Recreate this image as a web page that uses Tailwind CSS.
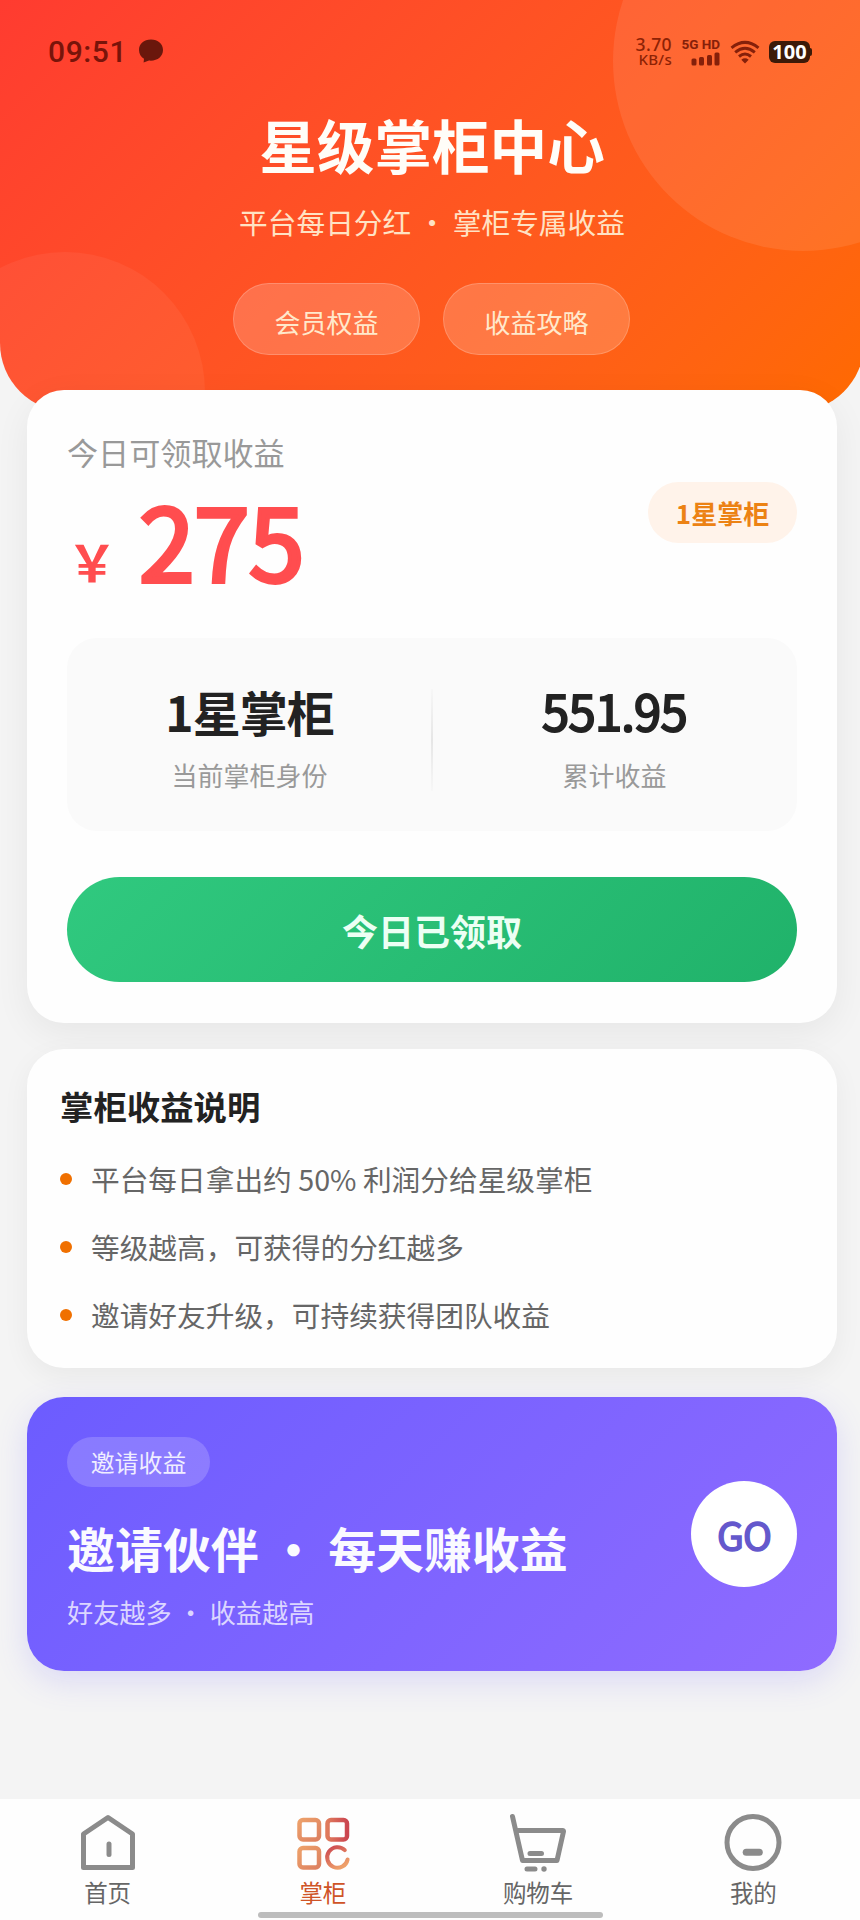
<!DOCTYPE html>
<html lang="zh-CN">
<head>
<meta charset="utf-8">
<title>星级掌柜中心</title>
<script src="https://cdn.jsdelivr.net/npm/@tailwindcss/browser@4"></script>
</head>
<body class="w-[860px] h-[1920px] overflow-hidden bg-[#f4f4f4] font-['Noto_Sans_CJK_SC',sans-serif]">
<div class="w-[864px] h-[1920px] flex flex-col">

  <header class="relative h-[412px] shrink-0 overflow-hidden rounded-b-[69px] bg-linear-135 from-[#ff3b30] to-[#ff6a00]">
    <div class="absolute left-[613px] top-[-129px] size-[380px] rounded-full bg-white/9"></div>
    <div class="absolute left-[-75px] top-[252px] size-[280px] rounded-full bg-white/5"></div>

    <div class="relative h-[104px] pl-[48px] pr-[52px] flex items-center">
      <span class="font-['Roboto',sans-serif] font-medium text-[30px] leading-[30px] tracking-[0.6px] text-[#78140a]">09:51</span>
      <svg class="ml-[11px] mt-[-3px]" width="26" height="24" viewBox="0 0 26 24" fill="#6a170c"><path d="M13 0.5C5.800 0.500 1 5 1 11c0 4 2 7 5 8.700L5.600 23.500 11 21.600c8 .8 14-4 14-10.600C25 5 20 .5 13 .5Z"/></svg>
      <div class="ml-auto flex items-center">
        <div class="w-[37px] font-['Noto_Sans',sans-serif] font-medium text-[#8d2205] text-right">
          <div class="text-[17.500px] leading-[15px] tracking-[0.4px]">3.70</div>
          <div class="text-[15px] leading-[15px] tracking-[0.3px]">KB/s</div>
        </div>
        <div class="ml-[9px] w-[39px] flex flex-col items-end text-[#85200a]">
          <div class="font-['Roboto',sans-serif] font-bold text-[13.500px] leading-[13px] whitespace-nowrap">5G HD</div>
          <svg class="mt-[1px]" width="29" height="14" viewBox="0 0 29 14" fill="#85200a"><rect x="0.500" y="6.500" width="5" height="7" rx="1.500"/><rect x="8" y="5" width="5" height="8.500" rx="1.500"/><rect x="16" y="3" width="5" height="10.500" rx="1.500"/><rect x="23.500" y="0.500" width="5" height="13" rx="1.500"/></svg>
        </div>
        <svg class="ml-[10px]" width="30" height="24" viewBox="0 0 30 24" fill="none" stroke="#85200a" stroke-width="3"><path d="M1.500 7.800Q15-3 28.500 7.800"/><path d="M5.200 12.300Q15 4.300 24.800 12.300"/><path d="M9 16.500Q15 11.500 21 16.500"/><path d="M15 23.500 11.300 19.700Q15 17 18.700 19.700Z" fill="#85200a" stroke="none"/></svg>
        <div class="ml-[9px] w-[41px] h-[22px] rounded-[6px] bg-[#3c1a08] flex items-center justify-center font-['Open_Sans',sans-serif] font-bold text-[20px] leading-[22px] text-white">100</div>
        <div class="w-[2px] h-[8px] rounded-r-[2px] bg-[#3c1a08]"></div>
      </div>
    </div>

    <div class="relative flex flex-col items-center pt-[10px]">
      <h1 class="font-bold text-[57.600px] leading-[60px] text-[#fffdf8]">星级掌柜中心</h1>
      <p class="mt-[30px] text-[28.700px] leading-[36px] text-[#ffe2c4]">平台每日分红 ・ 掌柜专属收益</p>
      <div class="mt-[43px] mr-[1px] flex gap-[23px]">
        <div class="w-[187px] h-[72px] pt-[5px] rounded-full border border-white/20 bg-white/18 flex items-center justify-center text-[26px] leading-[36px] text-[#ffe9cc]">会员权益</div>
        <div class="w-[187px] h-[72px] pt-[5px] rounded-full border border-white/20 bg-white/18 flex items-center justify-center text-[26px] leading-[36px] text-[#ffe9cc]">收益攻略</div>
      </div>
    </div>
  </header>

  <main class="relative mt-[-22px] px-[27px]">
    <section class="h-[633px] px-[40px] pt-[40px] rounded-[37px] bg-[#fefefe] shadow-[0_10px_36px_rgba(0,0,0,0.06)]">
      <div class="flex justify-between items-start">
        <div>
          <div class="text-[31.100px] leading-[44px] text-[#999]">今日可领取收益</div>
          <div class="flex items-baseline h-[130px] leading-[130px] font-bold text-[#ff4d4f]">
            <span class="text-[50px] leading-[134px]">￥</span>
            <span class="ml-[22px] font-normal text-[100px] leading-[130px] tracking-[-0.500px] [-webkit-text-stroke:4px_#ff4d4f]">275</span>
          </div>
        </div>
        <div class="mt-[52px] w-[149px] h-[61px] rounded-full bg-[#fff3ea] flex items-center justify-center font-bold text-[26px] leading-[36px] text-[#ec8214]">1星掌柜</div>
      </div>
      <div class="mt-[34px] h-[193px] pt-[43px] rounded-[30px] bg-[#fafafa] flex">
        <div class="flex-1 flex flex-col items-center">
          <div class="font-bold text-[48px] leading-[60px] tracking-[-1px] text-[#222]">1星掌柜</div>
          <div class="mt-[16px] text-[26px] leading-[36px] text-[#999]">当前掌柜身份</div>
        </div>
        <div class="mt-[8px] w-[2px] h-[102px] -mx-px bg-linear-to-b from-[#f7f7f7] via-[#e6e6e6] to-[#f7f7f7]"></div>
        <div class="flex-1 flex flex-col items-center">
          <div class="font-normal text-[49px] leading-[58px] mb-[2px] tracking-[-0.800px] text-[#222] [-webkit-text-stroke:2px_#222]">551.95</div>
          <div class="mt-[16px] text-[26px] leading-[36px] text-[#999]">累计收益</div>
        </div>
      </div>
      <div class="mt-[46px] h-[105px] rounded-full bg-linear-135 from-[#30c97f] to-[#20b26a] flex items-center justify-center font-bold text-[36px] leading-[50px] text-[#ecfff4]">今日已领取</div>
    </section>

    <section class="mt-[26px] h-[319px] px-[33px] pt-[35px] rounded-[37px] bg-[#fefefe] shadow-[0_8px_28px_rgba(0,0,0,0.05)]">
      <h2 class="font-bold text-[33.400px] leading-[44px] text-[#222]">掌柜收益说明</h2>
      <ul class="mt-[17px] text-[28.700px] leading-[40px] text-[#666]">
        <li class="flex items-center h-[68px]"><span class="size-[12px] rounded-full bg-[#f07000] mr-[19px]"></span>平台每日拿出约 50% 利润分给星级掌柜</li>
        <li class="flex items-center h-[68px]"><span class="size-[12px] rounded-full bg-[#f07000] mr-[19px]"></span>等级越高，可获得的分红越多</li>
        <li class="flex items-center h-[68px]"><span class="size-[12px] rounded-full bg-[#f07000] mr-[19px]"></span>邀请好友升级，可持续获得团队收益</li>
      </ul>
    </section>

    <section class="mt-[29px] h-[274px] px-[40px] pt-[40px] rounded-[37px] bg-linear-135 from-[#6c5cff] to-[#8f6bff] shadow-[0_10px_32px_rgba(108,92,255,0.18)] flex justify-between">
      <div>
        <div class="w-[143px] h-[50px] rounded-full bg-white/18 flex items-center justify-center text-[23.900px] leading-[34px] text-[#f0eeff]">邀请收益</div>
        <div class="mt-[30px] font-bold text-[47.900px] leading-[60px] text-[#fafaff]">邀请伙伴 ・ 每天赚收益</div>
        <div class="mt-[17px] text-[26.200px] leading-[36px] text-[#dcd6ff]">好友越多 ・ 收益越高</div>
      </div>
      <div class="mt-[44px] size-[106px] rounded-full bg-white flex items-center justify-center font-normal text-[39px] leading-[50px] tracking-[-1px] text-[#6458cc] [-webkit-text-stroke:1.500px_#6458cc]">GO</div>
    </section>
  </main>

  <nav class="mt-auto w-[861px] h-[121px] bg-[#fefefe] flex flex-col">
    <div class="h-[113px] pt-[13px] grid grid-cols-4 justify-items-center text-[23.500px] leading-[34px] text-[#666]">
      <div class="flex flex-col items-center">
        <svg width="60" height="60" viewBox="0 0 60 60" fill="none" stroke="#8b8b8b" stroke-width="5" stroke-linejoin="round" stroke-linecap="round"><path d="M30 5.500 54.500 22V55.500H5.500V22Z"/><path d="M31 32V42.500"/></svg>
        <span class="mt-[3px]">首页</span>
      </div>
      <div class="flex flex-col items-center text-[#cf5427]">
        <svg width="60" height="60" viewBox="0 0 60 60" fill="none" stroke-width="4.500" stroke-linecap="round">
          <defs>
            <linearGradient id="a" x1="0" y1="0" x2="1" y2="1"><stop offset="0" stop-color="#eda06a"/><stop offset="1" stop-color="#dd8161"/></linearGradient>
            <linearGradient id="b" x1="0" y1="0" x2="1" y2="0"><stop offset="0" stop-color="#e07a5c"/><stop offset="1" stop-color="#cb4650"/></linearGradient>
            <linearGradient id="c" x1="0" y1="0" x2="0.600" y2="1"><stop offset="0" stop-color="#cb4650"/><stop offset="1" stop-color="#ee9f69"/></linearGradient>
          </defs>
          <rect x="6.500" y="8" width="19.500" height="19.500" rx="3.500" stroke="url(#a)"/>
          <rect x="34.500" y="8" width="19.500" height="19.500" rx="3.500" stroke="url(#b)"/>
          <rect x="6.500" y="36" width="19.500" height="19.500" rx="3.500" stroke="url(#a)"/>
          <path d="M51.800 38.200A10.300 10.300 0 1 0 54.600 47.500" stroke="url(#c)" stroke-width="4"/>
        </svg>
        <span class="mt-[3px]">掌柜</span>
      </div>
      <div class="flex flex-col items-center">
        <svg width="60" height="60" viewBox="0 0 60 60" fill="none" stroke="#8b8b8b" stroke-width="5" stroke-linejoin="round" stroke-linecap="round"><path d="M4.500 4.500 14.500 48.500H49L55.500 19.500Q55.500 18.500 54.500 18.500H8.500"/><path d="M22 41.500H33.500M19 57H27"/><circle cx="36" cy="57" r="2.700" fill="#8b8b8b" stroke="none"/></svg>
        <span class="mt-[3px]">购物车</span>
      </div>
      <div class="flex flex-col items-center">
        <svg width="60" height="60" viewBox="0 0 60 60" fill="none" stroke="#8b8b8b"><circle cx="30" cy="30.500" r="26" stroke-width="5"/><path d="M23.200 40.300H36.300" stroke-width="7" stroke-linecap="round"/></svg>
        <span class="mt-[3px]">我的</span>
      </div>
    </div>
    <div class="ml-[258px] w-[345px] h-[6px] rounded-full bg-[#bdbdbd]"></div>
  </nav>
</div>
</body>
</html>
